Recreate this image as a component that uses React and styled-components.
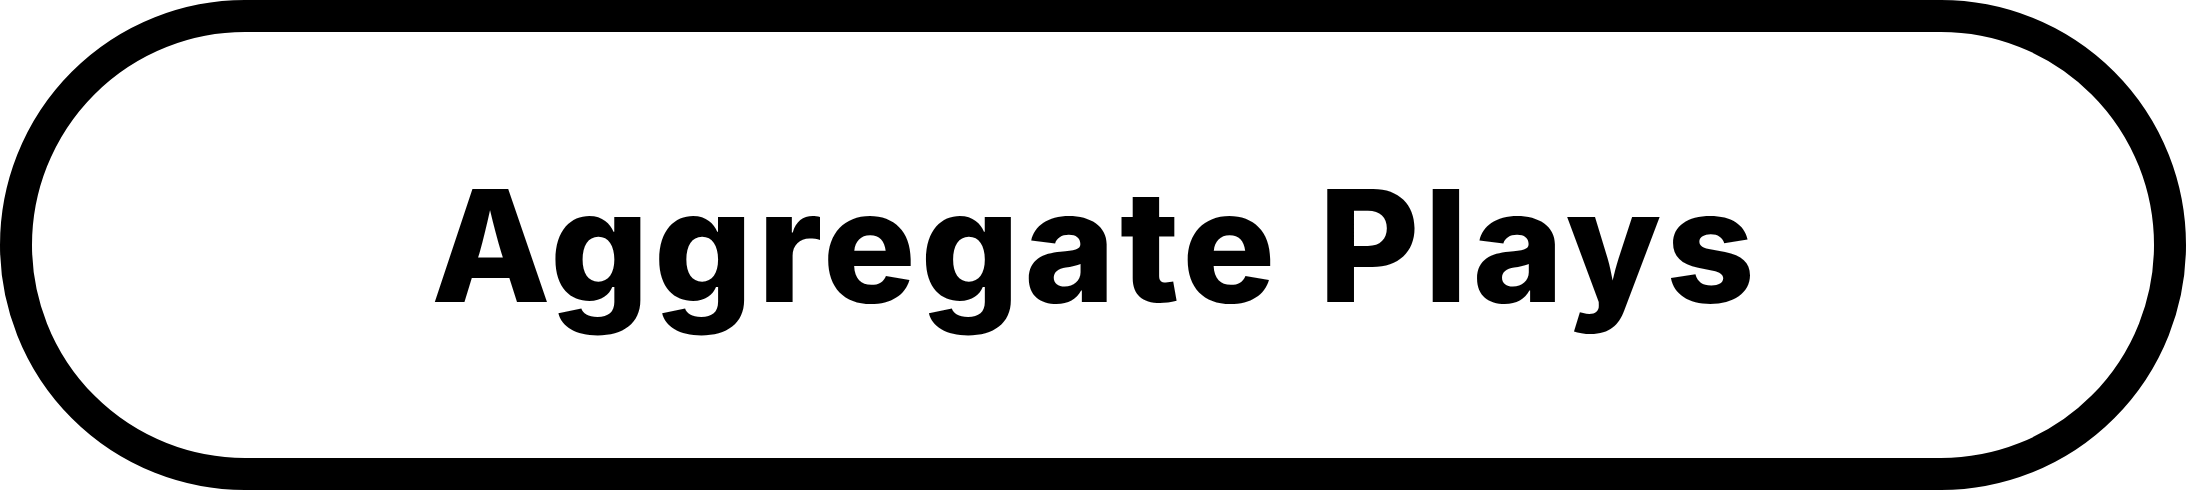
import React from "react";
import styled, { createGlobalStyle } from "styled-components";

const GlobalStyle = createGlobalStyle`
  html, body {
    margin: 0;
    padding: 0;
    background: #ffffff;
  }
`;

const Pill = styled.button`
  box-sizing: border-box;
  width: 2186px;
  height: 490px;
  display: flex;
  align-items: center;
  justify-content: center;
  padding: 0;
  margin: 0;
  background-color: #ffffff;
  border: 32px solid #000000;
  border-radius: 245px;
  cursor: pointer;
`;

// letter-spacing also trails the last glyph, so pad the left by the same amount
const Label = styled.span`
  font-family: Inter, "Noto Sans", sans-serif;
  font-weight: 800;
  font-size: 155px;
  line-height: 1;
  color: #000000;
  letter-spacing: ${({ spacing }) => spacing}px;
  padding-left: ${({ spacing }) => spacing}px;
`;

const App = () => {
  return (
    <>
      <GlobalStyle />
      <Pill>
        <Label spacing={4.6}>Aggregate Plays</Label>
      </Pill>
    </>
  );
};

export default App;
